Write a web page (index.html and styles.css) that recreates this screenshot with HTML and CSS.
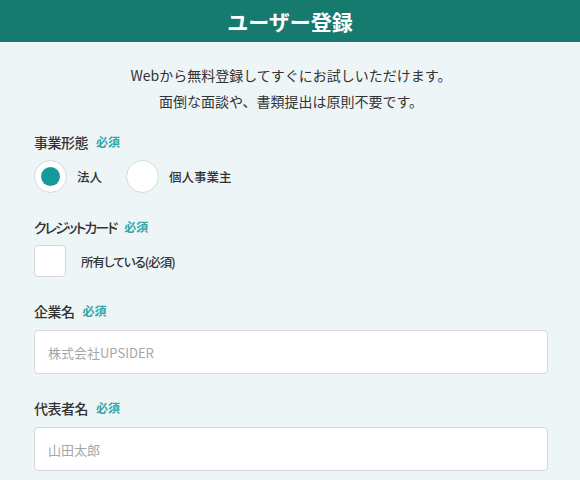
FILE: index.html
```html
<!DOCTYPE html>
<html lang="ja">
<head>
<meta charset="utf-8">
<title>ユーザー登録</title>
<link rel="stylesheet" href="styles.css">
</head>
<body>
<header class="page-header">
  <h1 class="page-title">ユーザー登録</h1>
</header>
<main class="form-area">
  <p class="intro">Webから無料登録してすぐにお試しいただけます。<br>面倒な面談や、書類提出は原則不要です。</p>

  <div class="field">
    <div class="field-label">事業形態<span class="req">必須</span></div>
    <div class="radio-row">
      <label class="radio-item">
        <span class="radio checked"><span class="radio-dot"></span></span>
        <span class="option-text">法人</span>
      </label>
      <label class="radio-item">
        <span class="radio"></span>
        <span class="option-text">個人事業主</span>
      </label>
    </div>
  </div>

  <div class="field">
    <div class="field-label"><span class="kana-tight">クレジットカード</span><span class="req">必須</span></div>
    <label class="check-item">
      <span class="checkbox"></span>
      <span class="check-text">所有している(必須)</span>
    </label>
  </div>

  <div class="field field-text">
    <div class="field-label">企業名<span class="req">必須</span></div>
    <div class="text-input"><span class="placeholder">株式会社UPSIDER</span></div>
  </div>

  <div class="field field-text">
    <div class="field-label">代表者名<span class="req">必須</span></div>
    <div class="text-input"><span class="placeholder">山田太郎</span></div>
  </div>
</main>
</body>
</html>
```

FILE: styles.css
```css
* { box-sizing: border-box; }
html, body {
  margin: 0;
  padding: 0;
  background: #eef5f7;
  font-family: "Noto Sans CJK JP", "Noto Sans", sans-serif;
  color: #333;
}
.page-header {
  height: 42px;
  background: #177a6f;
  display: flex;
  align-items: center;
  justify-content: center;
}
.page-title {
  margin: 0;
  color: #fff;
  font-size: 21px;
  font-weight: 700;
  line-height: 1;
}
.form-area {
  padding: 20px 32px 0 34px;
}
.intro {
  margin: 0 0 18px;
  text-align: center;
  font-size: 14px;
  line-height: 26px;
  color: #333;
}
.field {
  margin-bottom: 24px;
}
.field-label {
  font-size: 14px;
  line-height: 20px;
  font-weight: 500;
  color: #333;
  margin-bottom: 8px;
  display: flex;
  align-items: center;
  letter-spacing: -0.5px;
  font-feature-settings: "palt";
}
.field-text .field-label {
  margin-bottom: 9px;
}
.kana-tight {
  letter-spacing: -2px;
}
.req {
  margin-left: 8px;
  font-size: 12px;
  font-weight: 700;
  letter-spacing: 0;
  color: #33a6a7;
}
.radio-row {
  display: flex;
  align-items: center;
  gap: 24px;
}
.radio-item, .check-item {
  display: flex;
  align-items: center;
}
.radio {
  width: 33px;
  height: 33px;
  border-radius: 50%;
  background: #fff;
  border: 1px solid #d3d9dc;
  display: flex;
  align-items: center;
  justify-content: center;
}
.radio-dot {
  width: 19px;
  height: 19px;
  border-radius: 50%;
  background: #16999a;
}
.option-text {
  margin-left: 10px;
  font-size: 12.5px;
  font-weight: 500;
  color: #333;
}
.checkbox {
  width: 32px;
  height: 32px;
  border-radius: 4px;
  background: #fff;
  border: 1px solid #d3d9dc;
}
.check-text {
  margin-left: 15px;
  font-size: 12.5px;
  font-weight: 500;
  letter-spacing: -1px;
  color: #333;
  font-feature-settings: "palt";
}
.text-input {
  height: 44px;
  background: #fff;
  border: 1px solid #d3d9dc;
  border-radius: 4px;
  display: flex;
  align-items: center;
  padding-left: 13px;
}
.placeholder {
  font-size: 13px;
  color: #a3a7ab;
}
```
